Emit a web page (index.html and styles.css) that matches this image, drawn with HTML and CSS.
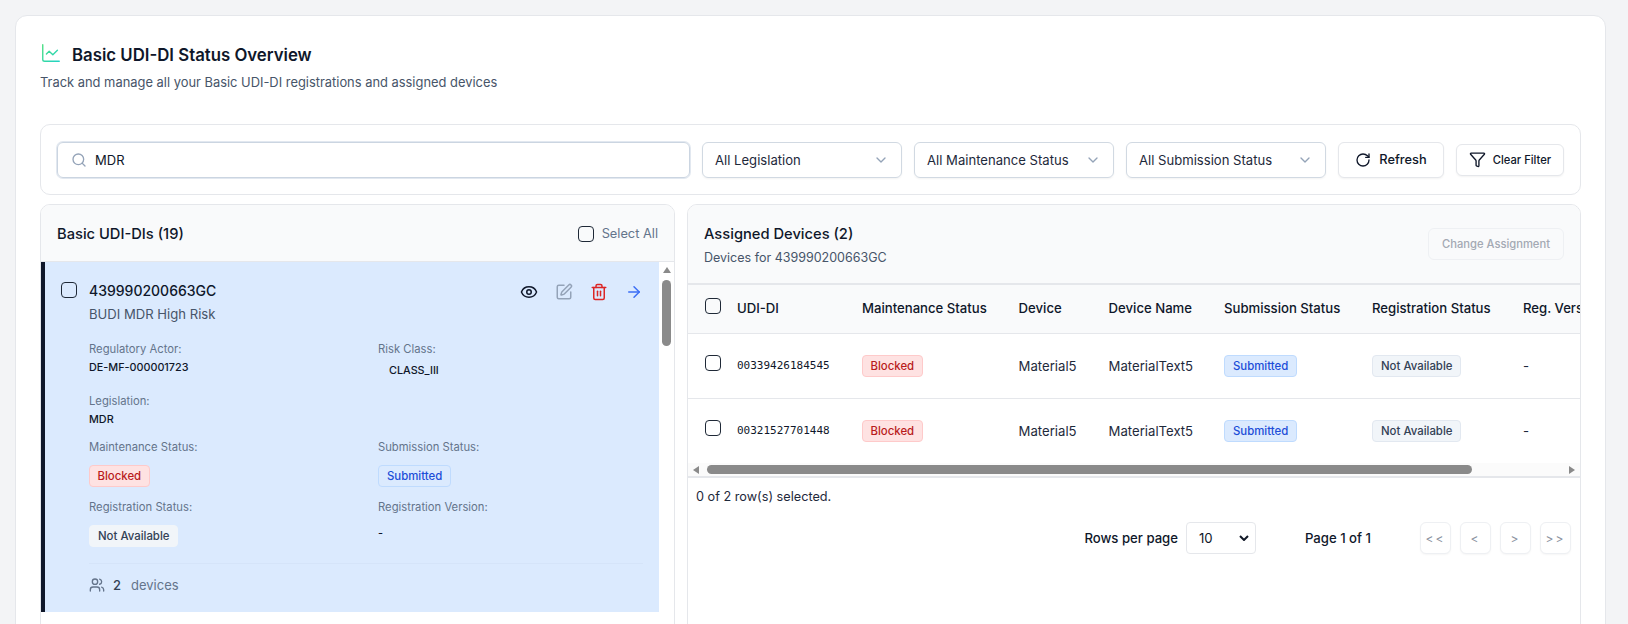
FILE: index.html
```html
<!DOCTYPE html>
<html lang="en">
<head>
<meta charset="utf-8">
<title>Basic UDI-DI Status Overview</title>
<link rel="stylesheet" href="styles.css">
</head>
<body>
<main class="card">
  <header class="page-head">
    <h1 class="page-title">
      <svg class="title-icon" viewBox="0 0 24 24" fill="none" stroke="url(#titleGrad)" stroke-width="1.5" stroke-linecap="round" stroke-linejoin="round"><defs><linearGradient id="titleGrad" gradientUnits="userSpaceOnUse" x1="3" y1="3" x2="21" y2="21"><stop offset="0" stop-color="#4ade80"/><stop offset="1" stop-color="#22d3c5"/></linearGradient></defs><path d="M3 3v16a2 2 0 0 0 2 2h16"/><path d="m19 9-5 5-4-4-3 3"/></svg>
      <span>Basic UDI-DI Status Overview</span>
    </h1>
    <p class="page-sub">Track and manage all your Basic UDI-DI registrations and assigned devices</p>
  </header>

  <section class="filters">
    <div class="search">
      <svg class="ic16 muted" viewBox="0 0 24 24"><path d="m21 21-4.34-4.34"/><circle cx="11" cy="11" r="8"/></svg>
      <span>MDR</span>
    </div>
    <div class="select s1"><span>All Legislation</span><svg class="ic16 faint" viewBox="0 0 24 24"><path d="m6 9 6 6 6-6"/></svg></div>
    <div class="select s1"><span>All Maintenance Status</span><svg class="ic16 faint" viewBox="0 0 24 24"><path d="m6 9 6 6 6-6"/></svg></div>
    <div class="select s1"><span>All Submission Status</span><svg class="ic16 faint" viewBox="0 0 24 24"><path d="m6 9 6 6 6-6"/></svg></div>
    <button class="btn refresh"><svg class="ic16" viewBox="0 0 24 24"><path d="M21 12a9 9 0 1 1-9-9c2.52 0 4.93 1 6.74 2.74L21 8"/><path d="M21 3v5h-5"/></svg>Refresh</button>
    <button class="btn clear"><svg class="ic17" viewBox="0 0 24 24"><path d="M10 20a1 1 0 0 0 .553.895l2 1A1 1 0 0 0 14 21v-7a2 2 0 0 1 .517-1.341L21.74 4.67A1 1 0 0 0 21 3H3a1 1 0 0 0-.742 1.67l7.225 7.989A2 2 0 0 1 10 14z"/></svg>Clear Filter</button>
  </section>

  <div class="columns">
    <section class="list-panel">
      <div class="list-head">
        <h2 class="panel-title">Basic UDI-DIs (19)</h2>
        <label class="select-all"><span class="check"></span>Select All</label>
      </div>
      <div class="list-body">
        <article class="item">
          <div class="item-top">
            <span class="check item-check"></span>
            <div class="item-name">
              <div class="item-id">439990200663GC</div>
              <div class="item-desc">BUDI MDR High Risk</div>
            </div>
            <div class="item-actions">
              <svg class="ic16 act dark" viewBox="0 0 24 24"><path d="M2.062 12.348a1 1 0 0 1 0-.696 10.75 10.75 0 0 1 19.876 0 1 1 0 0 1 0 .696 10.75 10.75 0 0 1-19.876 0"/><circle cx="12" cy="12" r="3"/></svg>
              <svg class="ic16 act gray" viewBox="0 0 24 24"><path d="M12 3H5a2 2 0 0 0-2 2v14a2 2 0 0 0 2 2h14a2 2 0 0 0 2-2v-7"/><path d="M18.375 2.625a1 1 0 0 1 3 3l-9.013 9.014a2 2 0 0 1-.853.505l-2.873.84a.5.5 0 0 1-.62-.62l.84-2.873a2 2 0 0 1 .506-.852z"/></svg>
              <svg class="ic16 act red" viewBox="0 0 24 24"><path d="M3 6h18"/><path d="M19 6v14c0 1-1 2-2 2H7c-1 0-2-1-2-2V6"/><path d="M8 6V4c0-1 1-2 2-2h4c1 0 2 1 2 2v2"/><path d="M10 11v6"/><path d="M14 11v6"/></svg>
              <svg class="ic16 act blue" viewBox="0 0 24 24"><path d="M5 12h14"/><path d="m12 5 7 7-7 7"/></svg>
            </div>
          </div>
          <div class="meta">
            <div class="field f-a"><div class="label">Regulatory Actor:</div><div class="value">DE-MF-000001723</div></div>
            <div class="field f-a"><div class="label">Risk Class:</div><div class="value class-val">CLASS_III</div></div>
            <div class="field f-b"><div class="label">Legislation:</div><div class="value">MDR</div></div>
            <div class="field f-b"></div>
            <div class="field f-c"><div class="label">Maintenance Status:</div><span class="badge b-red">Blocked</span></div>
            <div class="field f-c"><div class="label">Submission Status:</div><span class="badge b-blue">Submitted</span></div>
            <div class="field f-d"><div class="label">Registration Status:</div><span class="badge b-plain">Not Available</span></div>
            <div class="field f-d"><div class="label">Registration Version:</div><div class="value dash">-</div></div>
          </div>
          <div class="item-foot">
            <svg class="ic16 gray2" viewBox="0 0 24 24"><path d="M16 21v-2a4 4 0 0 0-4-4H6a4 4 0 0 0-4 4v2"/><path d="M16 3.128a4 4 0 0 1 0 7.744"/><path d="M22 21v-2a4 4 0 0 0-3-3.87"/><circle cx="9" cy="7" r="4"/></svg>
            <strong>2</strong><span>devices</span>
          </div>
        </article>
        <div class="vbar"><i class="arrow-up"></i><i class="vthumb"></i></div>
      </div>
    </section>

    <section class="devices-panel">
      <div class="devices-head">
        <div class="devices-titles">
          <h2 class="panel-title">Assigned Devices (2)</h2>
          <p class="devices-sub">Devices for 439990200663GC</p>
        </div>
        <button class="btn change">Change Assignment</button>
      </div>
      <div class="table-clip">
        <table class="table">
          <colgroup><col class="c1"><col class="c2"><col class="c3"><col class="c4"><col class="c5"><col class="c6"><col class="c7"><col class="c8"></colgroup>
          <thead>
            <tr><th class="cell-check"><span class="check"></span></th><th>UDI-DI</th><th>Maintenance Status</th><th>Device</th><th>Device Name</th><th>Submission Status</th><th>Registration Status</th><th>Reg. Version</th></tr>
          </thead>
          <tbody>
            <tr><td class="cell-check"><span class="check"></span></td><td class="mono">00339426184545</td><td><span class="badge b-red">Blocked</span></td><td>Material5</td><td>MaterialText5</td><td><span class="badge b-blue2">Submitted</span></td><td><span class="badge b-gray">Not Available</span></td><td>-</td></tr>
            <tr><td class="cell-check"><span class="check"></span></td><td class="mono">00321527701448</td><td><span class="badge b-red">Blocked</span></td><td>Material5</td><td>MaterialText5</td><td><span class="badge b-blue2">Submitted</span></td><td><span class="badge b-gray">Not Available</span></td><td>-</td></tr>
          </tbody>
        </table>
      </div>
      <div class="hbar"><i class="arrow-left"></i><i class="hthumb"></i><i class="arrow-right"></i></div>
      <div class="selected">0 of 2 row(s) selected.</div>
      <div class="pager">
        <span class="pager-label">Rows per page</span>
        <div class="page-size"><span>10</span><svg class="size-caret" viewBox="0 0 10 6"><path d="M1 1l4 4 4-4"/></svg></div>
        <span class="pager-page">Page 1 of 1</span>
        <div class="pager-btns">
          <button class="pg">&lt;&lt;</button><button class="pg">&lt;</button><button class="pg">&gt;</button><button class="pg">&gt;&gt;</button>
        </div>
      </div>
    </section>
  </div>
</main>
</body>
</html>
```
FILE: styles.css
```css
* { box-sizing: border-box; }
html, body { height: 100%; margin: 0; overflow: hidden; }
body {
  background: #f3f4f6;
  padding: 15px 22px 0 15px;
  font-family: Inter, "Noto Sans", sans-serif;
  font-size: 14px;
  color: #0f172a;
}
svg.ic16, svg.ic17 { width: 16px; height: 16px; fill: none; stroke: currentColor; stroke-width: 2; stroke-linecap: round; stroke-linejoin: round; flex: none; }
svg.ic17 { width: 17px; height: 17px; stroke-width: 1.9; }
svg.act { width: 18px; height: 18px; }
.muted { color: #94a3b8; }
.faint { color: #94a3b8; }
.dark { color: #0f172a; }
.gray { color: #94a3b8; }
.gray2 { color: #64748b; }
.red { color: #dc2626; }
.blue { color: #3b6ef5; }

.card {
  background: #fff;
  border: 1px solid #e5e7eb;
  border-radius: 12px;
  padding: 24px;
  height: 800px;
}
.page-head { height: 81px; }
.page-title { display: flex; align-items: center; gap: 10px; margin: 3px 0 0; font-size: 16.8px; font-weight: 600; line-height: 24px; color: #0f172a; }
.title-icon { width: 22px; height: 22px; flex: none; margin-top: -4px; }
.page-sub { margin: 6px 0 0; font-size: 12.9px; line-height: 20px; color: #475569; }

.filters {
  display: flex; align-items: center; gap: 12px;
  height: 71px; padding: 0 16px;
  border: 1px solid #e5e7eb; border-radius: 10px;
  background: #fff;
}
.search {
  flex: 1; height: 36px; display: flex; align-items: center; gap: 8px; padding: 0 13px;
  border: 1px solid #cbd5e1; border-radius: 6px; box-shadow: 0 0 0 1px #e2e8f0;
  font-size: 13px;
}
.select {
  width: 200px; height: 36px; display: flex; align-items: center; justify-content: space-between; padding: 0 12px;
  border: 1px solid #d1d9e2; border-radius: 6px; font-size: 13.1px; color: #1e293b; box-shadow: 0 1px 2px rgba(0,0,0,.05);
}
.btn {
  display: inline-flex; align-items: center; justify-content: center; gap: 8px;
  border: 1px solid #e5e7eb; border-radius: 6px; background: #fff; color: #0f172a;
  font-family: inherit; font-weight: 500; box-shadow: 0 1px 2px rgba(0,0,0,.05); padding: 0;
}
.refresh { width: 106px; height: 36px; font-size: 12.8px; }
.clear { width: 108px; height: 32px; font-size: 11.2px; gap: 7px; }

.columns { display: flex; gap: 12px; margin-top: 9px; }
.panel-title { margin: 0; font-size: 14.7px; font-weight: 500; line-height: 20px; color: #0f172a; }

.list-panel { width: 635px; height: 560px; border: 1px solid #e5e7eb; border-radius: 10px; overflow: hidden; }
.list-head { height: 57px; background: #f9fafb; border-bottom: 1px solid #e5e7eb; display: flex; align-items: center; justify-content: space-between; padding: 1px 16px 0; }
.select-all { display: flex; align-items: center; gap: 8px; font-size: 12.8px; color: #64748b; }
.check { display: inline-block; width: 16px; height: 16px; border: 1.5px solid #1f2937; border-radius: 4px; background: transparent; flex: none; }

.list-body { display: flex; align-items: flex-start; }
.item { flex: 1; height: 350px; background: #dbeafe; border-left: 4px solid #0f172a; padding: 19px 16px 0 16px; }
.item-top { display: flex; align-items: flex-start; gap: 12px; }
.item-check { margin-top: 1px; }
.item-name { flex: 1; }
.item-id { font-size: 14px; font-weight: 500; line-height: 20px; color: #0f172a; }
.item-desc { font-size: 13.1px; line-height: 20px; margin-top: 3px; color: #475569; }
.item-actions { display: flex; gap: 17px; padding: 2px 0 0 0; }
.meta { display: grid; grid-template-columns: 289px 1fr; margin: 17px 0 0 28px; }
.field { min-width: 0; }
.f-a { height: 52px; }
.f-b { height: 46px; }
.f-c { height: 60px; }
.f-d { height: 64px; }
.label { font-size: 11.25px; line-height: 16px; color: #64748b; }
.value { font-size: 10.8px; font-weight: 500; line-height: 16px; margin-top: 3px; color: #0f172a; }
.class-val { margin: 6px 0 0 11px; }
.value.dash { margin-top: 11px; }
.badge { display: inline-block; font-size: 11.4px; font-weight: 500; line-height: 16px; padding: 2px 8px; border-radius: 4px; border: 1px solid transparent; white-space: nowrap; }
.field .badge { margin-top: 10px; }
.b-red { background: #fee2e2; color: #b91c1c; border-color: #fecaca; padding: 2px 7.5px; }
.b-blue { background: #dbeafe; color: #1d4ed8; border-color: #bfdbfe; }
.b-blue2 { background: #dbeafe; color: #1d4ed8; border-color: #bfdbfe; }
.b-gray { background: #f1f5f9; color: #334155; border-color: #e2e8f0; }
.b-plain { background: #f1f5f9; color: #334155; border-color: #f1f5f9; }
.item-foot { display: flex; align-items: center; gap: 8px; margin-left: 28px; border-top: 1px solid #d5e4f9; padding-top: 13px; font-size: 13px; color: #64748b; }
.item-foot strong { font-weight: 500; color: #334155; margin-right: 2px; }

.vbar { width: 15px; height: 350px; background: #fff; display: flex; flex-direction: column; align-items: center; padding-top: 5px; gap: 7px; }
.arrow-up { width: 0; height: 0; border: 4.5px solid transparent; border-top: 0; border-bottom: 6px solid #8a8a8a; }
.vthumb { width: 9px; height: 66px; border-radius: 5px; background: #8a8a8a; }

.devices-panel { width: 894px; height: 560px; border: 1px solid #e5e7eb; border-radius: 10px; overflow: hidden; }
.devices-head { height: 80px; background: #f9fafb; border-bottom: 2px solid #e5e7eb; display: flex; align-items: center; justify-content: space-between; padding: 0 16px; }
.devices-titles { padding-top: 2px; }
.devices-sub { margin: 5px 0 0; font-size: 12.5px; line-height: 18px; color: #475569; }
.change { width: 136px; height: 32px; font-size: 11.2px; color: #a3a9b3; background: #f9fafb; border-color: #eef0f3; box-shadow: none; }
.table-clip { overflow: hidden; }
.table { width: 1003px; table-layout: fixed; border-collapse: collapse; }
.c1 { width: 41px; } .c2 { width: 125px; } .c3 { width: 156.6px; } .c4 { width: 90px; } .c5 { width: 115.4px; } .c6 { width: 148px; } .c7 { width: 151px; } .c8 { width: 176px; }
.table th { height: 48px; background: #f9fafb; border-bottom: 1px solid #e5e7eb; text-align: left; font-size: 13.15px; font-weight: 500; padding: 0 8px 1px; color: #0f172a; white-space: nowrap; }
.table td { height: 65px; border-bottom: 1px solid #e5e7eb; padding: 0 8px; color: #1e293b; font-size: 13.15px; white-space: nowrap; }
.table tbody tr:last-child td { border-bottom: 0; }
.table .cell-check { padding: 0 0 0 17px; }
.cell-check .check { display: block; margin-top: -5px; }
.table .mono { font-family: "DejaVu Sans Mono", "Liberation Mono", monospace; font-size: 11px; color: #0f172a; }
.hbar { height: 15px; display: flex; align-items: center; padding: 0 5px; border-bottom: 2px solid #e5e7eb; background: #fbfbfb; }
.arrow-left { width: 0; height: 0; border: 4.5px solid transparent; border-left: 0; border-right: 6px solid #8a8a8a; }
.arrow-right { width: 0; height: 0; border: 4.5px solid transparent; border-right: 0; border-left: 6px solid #8a8a8a; margin-left: auto; }
.hthumb { width: 765px; height: 9px; border-radius: 5px; background: #8a8a8a; margin-left: 8px; }
.selected { padding: 10px 8px 0; font-size: 12.7px; line-height: 18px; color: #1e293b; }
.pager { display: flex; align-items: center; justify-content: flex-end; padding: 16px 9px 0 0; font-size: 13.15px; font-weight: 500; }
.page-size { display: flex; align-items: center; justify-content: space-between; width: 70px; height: 32px; margin-left: 8px; padding: 0 6px 0 12px; border: 1px solid #e5e7eb; border-radius: 4px; font-weight: 400; }
.size-caret { width: 10px; height: 6px; fill: none; stroke: #111827; stroke-width: 2; }
.pager-page { margin-left: 49px; }
.pager-btns { display: flex; gap: 9px; margin-left: 49px; }
.pg { width: 31px; height: 32px; padding: 0; border: 1px solid #eef0f3; border-radius: 6px; background: #fff; color: #8b93a0; font-family: inherit; font-size: 12px; letter-spacing: 2px; box-shadow: 0 1px 2px rgba(0,0,0,.04); }
```
